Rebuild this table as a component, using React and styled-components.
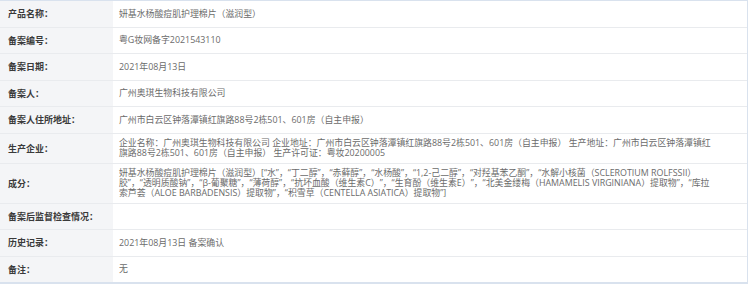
import React from 'react';
import styled, { createGlobalStyle } from 'styled-components';

const rows = [
  { label: '产品名称：', value: '妍基水杨酸痘肌护理棉片（滋润型）' },
  { label: '备案编号：', value: '粤G妆网备字2021543110' },
  { label: '备案日期：', value: '2021年08月13日' },
  { label: '备案人：', value: '广州奥琪生物科技有限公司' },
  { label: '备案人住所地址：', value: '广州市白云区钟落潭镇红旗路88号2栋501、601房（自主申报）' },
  {
    label: '生产企业：',
    value:
      '企业名称：广州奥琪生物科技有限公司 企业地址：广州市白云区钟落潭镇红旗路88号2栋501、601房（自主申报） 生产地址：广州市白云区钟落潭镇红旗路88号2栋501、601房（自主申报） 生产许可证：粤妆20200005',
    multi: true,
  },
  {
    label: '成分：',
    value:
      '妍基水杨酸痘肌护理棉片（滋润型）[“水”，“丁二醇”，“赤藓醇”，“水杨酸”，“1,2-己二醇”，“对羟基苯乙酮”，“水解小核菌（SCLEROTIUM ROLFSSII）胶”，“透明质酸钠”，“β-葡聚糖”，“薄荷醇”，“抗坏血酸（维生素C）”，“生育酚（维生素E）”，“北美金缕梅（HAMAMELIS VIRGINIANA）提取物”，“库拉索芦荟（ALOE BARBADENSIS）提取物”，“积雪草（CENTELLA ASIATICA）提取物”]',
    multi: true,
  },
  { label: '备案后监督检查情况：', value: '' },
  { label: '历史记录：', value: '2021年08月13日 备案确认' },
  { label: '备注：', value: '无' },
];

// no line break next to a quotation mark (old UAX14 rule)
const keepQuotes = (s) => s.replace(/[“”]/g, (m) => `\u2060${m}\u2060`);

const GlobalStyle = createGlobalStyle`
  body {
    margin: 0;
    background: #ffffff;
    font-family: "Open Sans", "Noto Sans CJK SC", sans-serif;
  }
`;

const Table = styled.div`
  width: 747px;
  border-top: 1px solid #d9e2ee;
  border-right: 1px solid #d9e2ee;
  border-bottom: 2px solid #d9e2ee;
`;

const Row = styled.div`
  display: grid;
  grid-template-columns: 113px 1fr;
  min-height: 25.5px;
  border-bottom: 1px solid #e9ebee;

  &:last-child {
    border-bottom: none;
  }
`;

const Label = styled.div`
  display: flex;
  align-items: center;
  padding-left: 8px;
  background: #f4f5f7;
  color: #3a3a3a;
  font-family: "Noto Sans CJK SC", sans-serif;
  font-size: 9px;
  font-weight: 700;
`;

const Value = styled.div`
  display: flex;
  align-items: center;
  padding: ${(p) => (p.$multi ? '4.5px 31px 4.5px 6px' : '0 31px 0 6px')};
  background: #ffffff;
  color: #6b6b6b;
  font-size: 8.9px;
  line-height: 10px;
  overflow-wrap: anywhere;
`;

export default function App() {
  return (
    <>
      <GlobalStyle />
      <Table>
        {rows.map((r) => (
          <Row key={r.label}>
            <Label>{r.label}</Label>
            <Value $multi={r.multi}>{keepQuotes(r.value)}</Value>
          </Row>
        ))}
      </Table>
    </>
  );
}
